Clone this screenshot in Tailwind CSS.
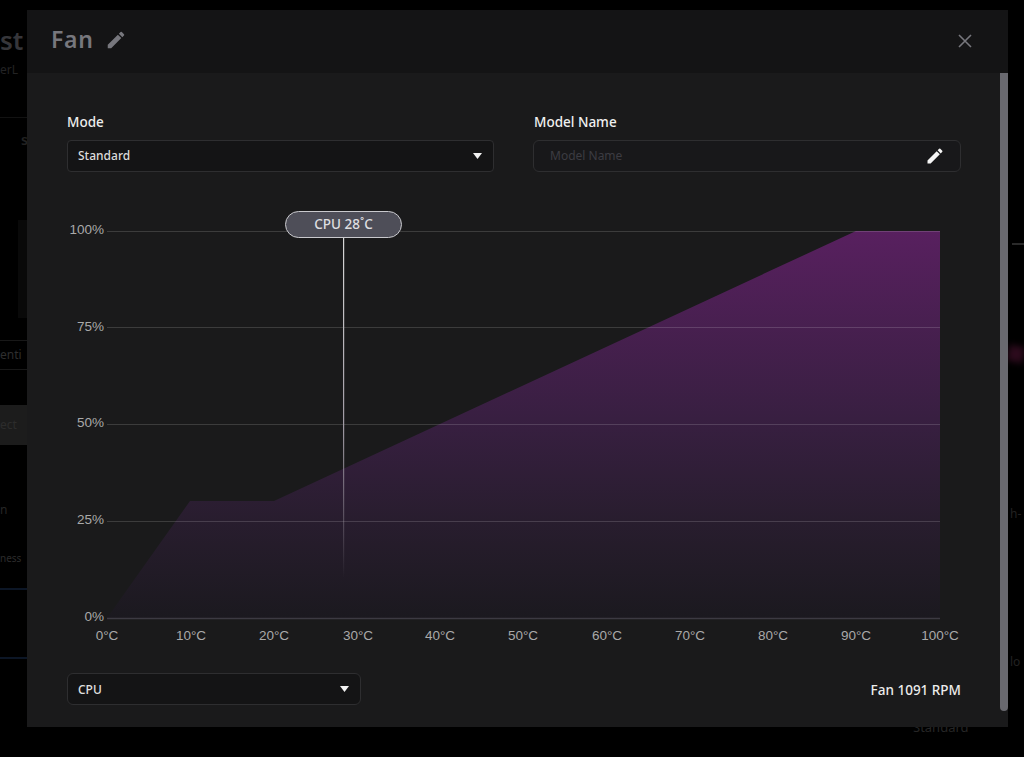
<!DOCTYPE html>
<html lang="en">
<head>
    <meta charset="UTF-8">
    <meta name="viewport" content="width=device-width, initial-scale=1.0">
    <title>Fan</title>
    <script src="https://cdn.jsdelivr.net/npm/@tailwindcss/browser@4"></script>
</head>
<body class="bg-black h-[757px] w-[1024px] overflow-hidden relative font-['Noto_Sans',sans-serif]">

    <!-- dimmed page behind the dialog -->
    <div class="absolute inset-0 overflow-hidden">
        <span class="absolute left-0 top-[22px] text-[26px] leading-9 font-semibold text-[#36363a]">st</span>
        <span class="absolute left-0 top-[62px] text-xs text-[#232324]">erL</span>
        <div class="absolute left-0 top-[117px] w-[27px] h-px bg-[#121212]"></div>
        <span class="absolute left-[21px] top-[130px] text-sm font-semibold text-[#222]">s</span>
        <div class="absolute left-[18px] top-[220px] w-[9px] h-[98px] bg-[#090909]"></div>
        <div class="absolute left-0 top-[340px] w-[27px] h-[30px] border-y border-[#181818] text-xs leading-7 text-[#2e2e2e]">enti</div>
        <div class="absolute left-0 top-[405px] w-[27px] h-[40px] bg-[#1c1c1c] text-xs leading-10 text-[#2c2c2c]">ect</div>
        <span class="absolute left-0 top-[502px] text-xs text-[#262626]">n</span>
        <span class="absolute left-0 top-[551px] text-[10px] text-[#2c2c2c]">ness</span>
        <div class="absolute left-0 top-[588px] w-[27px] h-0.5 bg-[#0c1626]"></div>
        <div class="absolute left-0 top-[657px] w-[27px] h-0.5 bg-[#0c1626]"></div>
        <div class="absolute left-[1012px] top-[243px] w-3 h-0.5 bg-[#2a2a2a]"></div>
        <div class="absolute left-[1008px] top-[346px] w-4 h-[16px] bg-[#2c0a1c] blur-[3px] rotate-12"></div>
        <span class="absolute left-[1010px] top-[506px] text-xs text-[#222]">h-</span>
        <span class="absolute left-[1010px] top-[654px] text-xs text-[#222]">lo</span>
        <span class="absolute left-[913px] top-[718px] text-[13px] text-[#262626]">Standard</span>
    </div>

    <!-- dialog -->
    <div class="absolute left-[27px] top-[10px] w-[981px] h-[717px] flex flex-col bg-[#1a1a1b]">
        <div class="h-[63px] shrink-0 bg-[#141415] flex items-center justify-between pl-6 pr-[35px] pb-[6px]">
            <div class="flex items-center gap-[11px]">
                <span class="text-[23px] leading-8 font-semibold tracking-[0.7px] text-[#77777d]">Fan</span>
                <svg class="w-[22px] h-[22px] mt-[3px]" viewBox="0 0 24 24" fill="#77777d"><path d="M3 17.25V21h3.75L17.81 9.94l-3.75-3.75L3 17.25zM20.71 7.04a1 1 0 0 0 0-1.41l-2.34-2.34a1 1 0 0 0-1.41 0l-1.83 1.83 3.75 3.75 1.83-1.83z"/></svg>
            </div>
            <svg class="w-[16px] h-[16px] mt-[4px]" viewBox="0 0 16 16" fill="none" stroke="#77777d" stroke-width="1.6"><path d="M2 2l12 12M14 2L2 14"/></svg>
        </div>

        <div class="relative flex-1 pl-10 pr-[47px] pt-[40px]">
            <!-- scrollbar -->
            <div class="absolute right-0 top-0 w-2 h-[638px] rounded-b-sm bg-[#69696f]"></div>

            <div class="grid grid-cols-[427px_428px] gap-x-[39px]">
                <div>
                    <div class="text-[13.5px] leading-[19px] font-medium text-[#ededed]">Mode</div>
                    <div class="mt-[8px] h-8 rounded border border-[#2e2e30] bg-[#141415] flex items-center justify-between pl-[10px] pr-[11px]">
                        <span class="text-xs font-medium text-[#dcdcdc]">Standard</span>
                        <svg class="w-[9px] h-[6px]" viewBox="0 0 9 6" fill="#f2f2f2"><path d="M0 0h9L4.5 6z"/></svg>
                    </div>
                </div>
                <div>
                    <div class="pl-px text-[13.5px] leading-[19px] font-medium text-[#f0f0f0]">Model Name</div>
                    <div class="mt-[8px] h-8 rounded-md border border-[#2e2e30] bg-[#18181a] flex items-center justify-between pl-4 pr-[15px]">
                        <span class="text-xs text-[#3c3c42]">Model Name</span>
                        <svg class="w-[20px] h-[20px]" viewBox="0 0 24 24" fill="#f5f5f5"><path d="M3 17.25V21h3.75L17.81 9.94l-3.75-3.75L3 17.25zM20.71 7.04a1 1 0 0 0 0-1.41l-2.34-2.34a1 1 0 0 0-1.41 0l-1.83 1.83 3.75 3.75 1.83-1.83z"/></svg>
                    </div>
                </div>
            </div>

            <!-- fan curve, svg origin sits at page (27,205) -->
            <div class="relative mt-[33px] -ml-10 h-[455px]">
                <svg class="absolute left-0 top-0 font-['Liberation_Sans',sans-serif]" width="970" height="455" viewBox="0 0 970 455">
                    <defs>
                        <linearGradient id="curveFill" x1="0" y1="0" x2="0" y2="1">
                            <stop offset="0" stop-color="#58205f"/>
                            <stop offset="0.5" stop-color="#371f40"/>
                            <stop offset="0.75" stop-color="#281d2e"/>
                            <stop offset="1" stop-color="#1b191f"/>
                        </linearGradient>
                        <linearGradient id="tempLine" x1="0" y1="0" x2="0" y2="1">
                            <stop offset="0" stop-color="#d8d8d8"/>
                            <stop offset="0.55" stop-color="#a09aa4"/>
                            <stop offset="1" stop-color="#a09aa4" stop-opacity="0"/>
                        </linearGradient>
                    </defs>
                    <path d="M80 413L163 296H247L829 26H913V413Z" fill="url(#curveFill)"/>
                    <g stroke="#ffffff" stroke-opacity="0.15" stroke-width="1">
                        <path d="M80 26.5H913M80 122.5H913M80 219.5H913M80 316.5H913"/>
                    </g>
                    <path d="M80 413.5H913" stroke="#3c3a42" stroke-width="1.5"/>
                    <g fill="#a9a9a9" font-size="13.5" text-anchor="end">
                        <text x="77" y="29">100%</text>
                        <text x="77" y="126">75%</text>
                        <text x="77" y="222">50%</text>
                        <text x="77" y="319">25%</text>
                        <text x="77" y="416">0%</text>
                    </g>
                    <g fill="#a9a9a9" font-size="13.5" text-anchor="middle">
                        <text x="80" y="435">0°C</text>
                        <text x="164" y="435">10°C</text>
                        <text x="247" y="435">20°C</text>
                        <text x="331" y="435">30°C</text>
                        <text x="413" y="435">40°C</text>
                        <text x="496" y="435">50°C</text>
                        <text x="580" y="435">60°C</text>
                        <text x="663" y="435">70°C</text>
                        <text x="746" y="435">80°C</text>
                        <text x="829" y="435">90°C</text>
                        <text x="913" y="435">100°C</text>
                    </g>
                    <rect x="316" y="33" width="1.2" height="340" fill="url(#tempLine)"/>
                </svg>
                <div class="absolute left-[258px] top-[6px] w-[117px] h-[27px] rounded-full border border-[#c9c9cd] bg-[#4e4e58] flex items-center justify-center text-[13.5px] font-medium text-[#dedee0]">CPU 28˚C</div>
            </div>

            <div class="flex items-center justify-between mt-[13px]">
                <div class="w-[294px] h-8 rounded-md border border-[#2e2e30] bg-[#141415] flex items-center justify-between pl-[10px] pr-[11px]">
                    <span class="text-xs font-medium leading-4 mt-px text-[#e0e0e0]">CPU</span>
                    <svg class="w-[9px] h-[6px]" viewBox="0 0 9 6" fill="#f2f2f2"><path d="M0 0h9L4.5 6z"/></svg>
                </div>
                <span class="text-[13.5px] font-medium mt-[3px] text-[#ececec]">Fan 1091 RPM</span>
            </div>
        </div>
    </div>
</body>
</html>
